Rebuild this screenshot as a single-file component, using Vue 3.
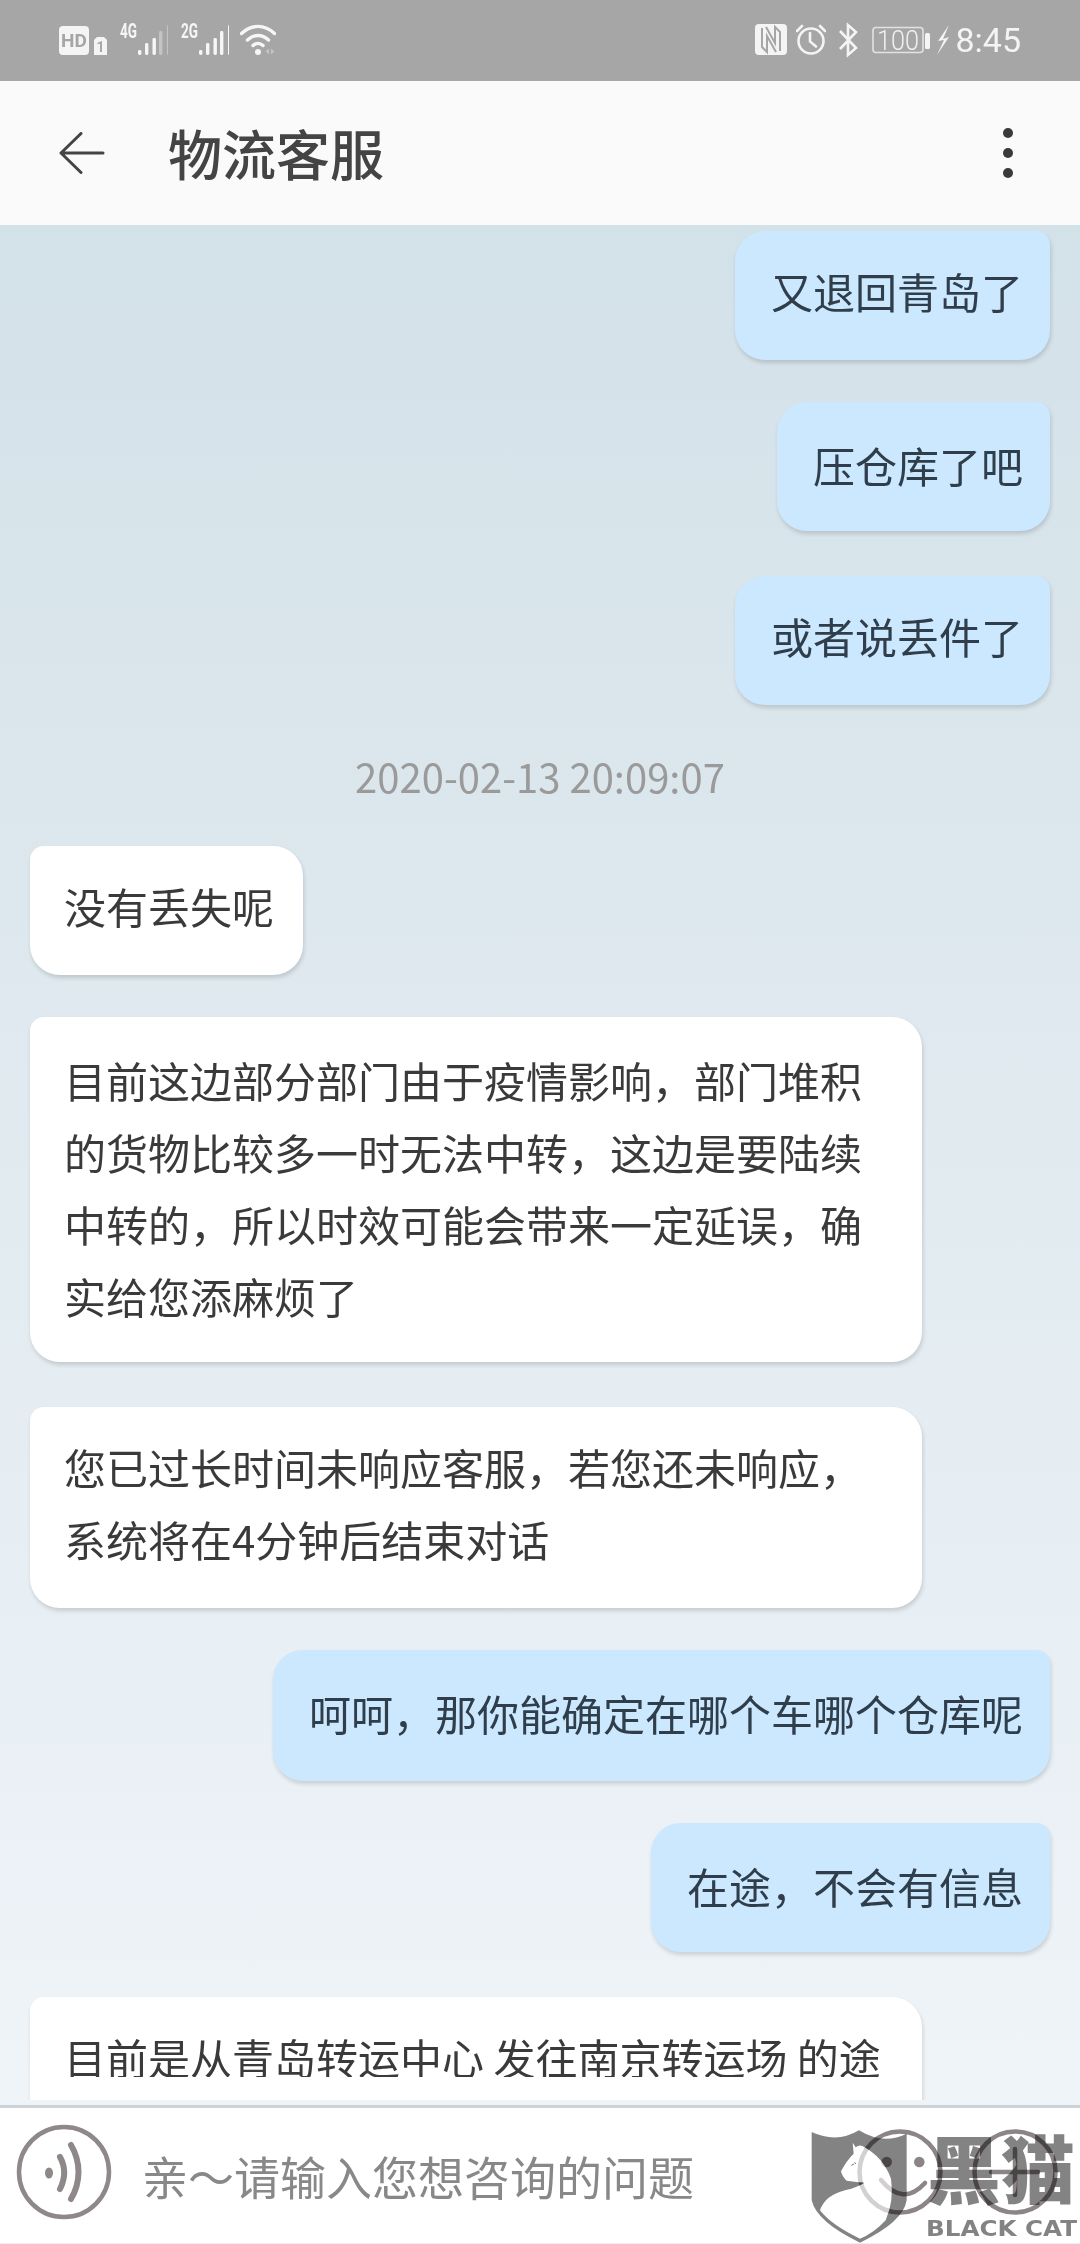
<script setup>
const signals = [
  { label: '4G', dim: 2 },
  { label: '2G', dim: 0 }
]

const bars = [
  { x: 1, top: 50 },
  { x: 8, top: 43 },
  { x: 15.5, top: 38 },
  { x: 22, top: 31 },
  { x: 30, top: 25 }
]

// far / low / tall 是截图里间距不均匀的几条
const messages = [
  { type: 'me', text: '又退回青岛了' },
  { type: 'me low', text: '压仓库了吧' },
  { type: 'me far', text: '或者说丢件了' },
  { type: 'time', text: '2020-02-13 20:09:07' },
  { type: 'them', text: '没有丢失呢' },
  { type: 'them low', text: '目前这边部分部门由于疫情影响，部门堆积的货物比较多一时无法中转，这边是要陆续中转的，所以时效可能会带来一定延误，确实给您添麻烦了' },
  { type: 'them far', text: '您已过长时间未响应客服，若您还未响应，系统将在4分钟后结束对话' },
  { type: 'me low tall', text: '呵呵，那你能确定在哪个车哪个仓库呢' },
  { type: 'me low', text: '在途，不会有信息' },
  { type: 'them far wide', text: '目前是从青岛转运中心 发往南京转运场 的途' }
]

const shield = 'M20 30Q95 65 162 25Q235 70 305 35V235Q295 300 165 362Q35 300 20 235Z'
const cat = 'M143 62L152 76Q162 68 172 72Q235 105 258 170Q268 235 242 295Q205 335 165 350Q80 310 45 265Q60 220 120 205Q160 195 178 182Q155 180 125 176Q112 165 108 148Q125 115 146 95Z'
</script>

<template>
  <div class="page">
    <div class="status">
      <div class="status-group left">
        <svg width="30" height="81" viewBox="0 0 30 81">
          <rect y="26" width="30" height="29" rx="4" fill="#f4f4f4" />
          <text x="15" y="47" text-anchor="middle" class="hd">HD</text>
        </svg>
        <svg class="gap-5" width="13" height="81" viewBox="0 0 13 81">
          <path d="M3 37h7l3 3v15H0V40z" fill="#f4f4f4" />
          <text x="6.5" y="52" text-anchor="middle" class="sim">1</text>
        </svg>
        <svg v-for="s in signals" :key="s.label" class="signal" width="48" height="81" viewBox="0 0 48 81">
          <text x="0" y="38" class="net" textLength="17" lengthAdjust="spacingAndGlyphs">{{ s.label }}</text>
          <rect
            v-for="(b, i) in bars"
            :key="i"
            :x="b.x + 17"
            :y="b.top"
            width="3.4"
            :height="55 - b.top"
            rx="1.4"
            :fill="i >= bars.length - s.dim ? '#c4c4c4' : '#f6f6f6'"
          />
        </svg>
        <svg class="wifi" width="36" height="81" viewBox="0 0 36 81" fill="none" stroke="#f6f6f6" stroke-linecap="round">
          <path d="M1.500 33.500c10-9.500 23-9.500 33 0" stroke-width="3.400" />
          <path d="M7.500 40c6.500-6 14.500-6 21 0" stroke-width="3.400" />
          <path d="M13 45.500c3-2.800 7-2.800 10 0" stroke-width="3.400" />
          <circle cx="18" cy="52" r="3" fill="#f6f6f6" stroke="none" />
          <path d="M29 48.500v6l-3.500-3zM31 48.500v6l3.500-3z" fill="#c4c4c4" stroke="none" />
        </svg>
      </div>
      <div class="status-group right">
        <svg width="32" height="81" viewBox="0 0 32 81">
          <rect y="24" width="32" height="31" rx="4" fill="#f4f4f4" />
          <path d="M7 28v19l5 5V36l9 16M25 51V32l-5-5v16L11 27" fill="none" stroke="#a6a6a6" stroke-width="2" />
        </svg>
        <svg class="gap-9" width="30" height="81" viewBox="0 0 30 81" fill="none" stroke="#f4f4f4" stroke-linecap="round">
          <circle cx="15" cy="41" r="12.500" stroke-width="2.600" />
          <path d="M14 33v8.500l6 5" stroke-width="2.600" />
          <path d="M1 31l5-5M29 31l-5-5" stroke-width="2.600" />
        </svg>
        <svg class="gap-12" width="20" height="81" viewBox="0 0 20 81" fill="none" stroke="#f4f4f4" stroke-width="2.600">
          <path d="M2 31l16 17-8 7V25l8 7-16 17" />
        </svg>
        <svg class="gap-14" width="58" height="81" viewBox="0 0 58 81">
          <rect x="1" y="27.500" width="50" height="25" rx="3" fill="none" stroke="#e2e2e2" stroke-width="1.600" />
          <text x="5" y="50" class="batt" textLength="42" lengthAdjust="spacingAndGlyphs">100</text>
          <rect x="53" y="33" width="5" height="16" rx="1.500" fill="#f4f4f4" />
        </svg>
        <svg class="gap-6" width="14" height="81" viewBox="0 0 14 81">
          <path d="M13 25L2 41l6-1-7 15 12-18-6 2z" fill="#f4f4f4" />
        </svg>
        <span class="clock">8:45</span>
      </div>
    </div>

    <div class="header">
      <svg class="back" width="46" height="42" viewBox="0 0 46 42" fill="none" stroke="#444" stroke-width="3" stroke-linecap="round" stroke-linejoin="round">
        <path d="M44 21H2M22 1.500L2 21l20 19.500" />
      </svg>
      <div class="title">物流客服</div>
      <div class="more">
        <i></i><i></i><i></i>
      </div>
    </div>

    <div class="chat">
      <div class="list">
        <template v-for="(m, i) in messages" :key="i">
          <div v-if="m.type === 'time'" class="time">{{ m.text }}</div>
          <div v-else class="bubble" :class="m.type">
            <div class="bubble-text">{{ m.text }}</div>
          </div>
        </template>
      </div>
    </div>

    <div class="input-bar">
      <svg class="mic" width="96" height="96" viewBox="0 0 96 96" fill="none" stroke="#8f8888" stroke-linecap="round">
        <circle cx="48" cy="48" r="45" stroke-width="4.500" />
        <ellipse cx="33" cy="49" rx="4" ry="5.500" fill="#8f8888" stroke="none" />
        <path d="M44 33c5.500 10 5.500 21 0 32" stroke-width="6" />
        <path d="M55 21c10 17 10 37 0 54" stroke-width="6" />
      </svg>
      <div class="placeholder">亲～请输入您想咨询的问题</div>
      <svg class="action smile" width="86" height="86" viewBox="0 0 86 86" fill="none" stroke="#8d8585" stroke-width="4.500" stroke-linecap="round">
        <circle cx="43" cy="43" r="40.500" />
        <circle cx="29.700" cy="33" r="5.300" fill="#8d8585" stroke="none" />
        <circle cx="62.300" cy="33" r="5.300" fill="#8d8585" stroke="none" />
        <path d="M24 51Q46 78 68 54" />
      </svg>
      <svg class="action plus" width="86" height="86" viewBox="0 0 86 86" fill="none" stroke="#8d8585" stroke-width="4.500" stroke-linecap="round">
        <circle cx="43" cy="43" r="40.500" />
        <path d="M43 20v46M19 43h47" />
      </svg>

      <!-- 水印：一层白色猫身盖住图标，一层正片叠底的灰色盾牌和文字 -->
      <svg class="watermark" width="269" height="115" viewBox="0 0 269 115">
        <g transform="translate(-6 -7) scale(0.3333)">
          <path :d="cat" fill="#fff" opacity="0.62" />
        </g>
      </svg>
      <svg class="watermark multiply" width="269" height="115" viewBox="0 0 269 115">
        <g transform="translate(-6 -7) scale(0.3333)">
          <path :d="shield + cat" fill="#838383" fill-rule="evenodd" />
          <path d="M139 130l8-4M148 122l5 3" stroke="#777" stroke-width="3" fill="none" />
        </g>
        <text x="116" y="69" class="wm-cn">黑猫</text>
        <text x="115" y="107" class="wm-en" textLength="151" lengthAdjust="spacingAndGlyphs">BLACK CAT</text>
      </svg>
    </div>
  </div>
</template>

<style scoped>
.page {
  width: 1080px;
  height: 2244px;
  display: flex;
  flex-direction: column;
  overflow: hidden;
  font-family: "Noto Sans CJK SC", "Noto Sans", sans-serif;
}

.status {
  height: 81px;
  flex-shrink: 0;
  background: #a6a6a6;
  display: flex;
  justify-content: space-between;
  padding: 0 59px;
}

.status-group {
  display: flex;
  align-items: center;
}

.hd {
  font: 700 19px "Roboto", sans-serif;
  fill: #a6a6a6;
}

.sim {
  font: 700 14px "Roboto", sans-serif;
  fill: #a6a6a6;
}

.net {
  font: 700 20px "Roboto", sans-serif;
  fill: #f6f6f6;
}

.batt {
  font: 300 28px "Roboto", sans-serif;
  fill: #f0f0f0;
}

.gap-5 { margin-left: 5px; }
.gap-6 { margin-left: 6px; }
.gap-9 { margin-left: 9px; }
.gap-12 { margin-left: 12px; }
.gap-14 { margin-left: 14px; }
.signal { margin-left: 13px; }
.wifi { margin-left: 11px; }

.clock {
  margin-left: 5px;
  font: 400 34px "Roboto", sans-serif;
  color: #f4f4f4;
  line-height: 81px;
}

.header {
  height: 144px;
  flex-shrink: 0;
  background: #fafafa;
  display: flex;
  align-items: center;
  padding-left: 59px;
  box-sizing: border-box;
}

.title {
  margin-left: 63px;
  font-size: 54px;
  font-weight: 500;
  color: #444;
  line-height: 1;
}

.more {
  margin-left: auto;
  margin-right: 67px;
  display: flex;
  flex-direction: column;
  gap: 10px;
}

.more i {
  display: block;
  width: 10px;
  height: 10px;
  border-radius: 50%;
  background: #3a3a3a;
}

.chat {
  flex: 1;
  min-height: 0;
  padding: 6px 0 5px;
  box-sizing: border-box;
  background: linear-gradient(180deg, #d3e1e8 0%, #eff4f8 100%);
  display: flex;
}

.list {
  flex: 1;
  min-height: 0;
  overflow: hidden;
  padding: 0 30px;
  display: flex;
  flex-direction: column;
  gap: 42px;
}

.bubble {
  max-width: 892px;
  box-sizing: border-box;
  font-size: 42px;
  line-height: 72px;
  flex-shrink: 0;
  box-shadow: 1px 3px 4px rgba(0, 0, 0, 0.14);
}

.me {
  align-self: flex-end;
  padding: 24px 27px 33px 36px;
  background: #cbe8fe;
  color: #2f3e4a;
  border-radius: 30px 14px 30px 30px;
}

.them {
  align-self: flex-start;
  padding: 24px 29px 33px 34px;
  background: #fff;
  color: #3a3a3a;
  border-radius: 14px 30px 30px 30px;
}

.far {
  margin-top: 3px;
}

.low {
  padding-top: 27px;
  padding-bottom: 30px;
}

.tall {
  padding-bottom: 32px;
}

.wide {
  width: 892px;
  height: 200px;
}

/* 最后一条只露出被截断的第一行 */
.wide .bubble-text {
  height: 56px;
  overflow: hidden;
}

.time {
  height: 57px;
  flex-shrink: 0;
  text-align: center;
  font-size: 40px;
  line-height: 58px;
  color: #9a9a9a;
}

.input-bar {
  position: relative;
  height: 139px;
  flex-shrink: 0;
  box-sizing: border-box;
  background: #fff;
  border-top: 3px solid #ccd2d6;
  border-bottom: 1px solid #eee;
  display: flex;
  align-items: center;
  padding: 0 0 7px 16px;
}

.placeholder {
  margin-left: 30px;
  margin-top: 6px;
  font-size: 46px;
  line-height: 1;
  color: #888;
}

.action {
  flex-shrink: 0;
}

.smile {
  margin-left: auto;
}

.plus {
  margin-left: 29px;
  margin-right: 22px;
}

.watermark {
  position: absolute;
  left: 811px;
  top: 21px;
}

.multiply {
  mix-blend-mode: multiply;
}

.wm-cn {
  font-size: 74px;
  font-weight: 900;
  fill: #838383;
}

.wm-en {
  font-family: "DejaVu Sans", sans-serif;
  font-size: 21px;
  font-weight: 700;
  fill: #838383;
}
</style>
